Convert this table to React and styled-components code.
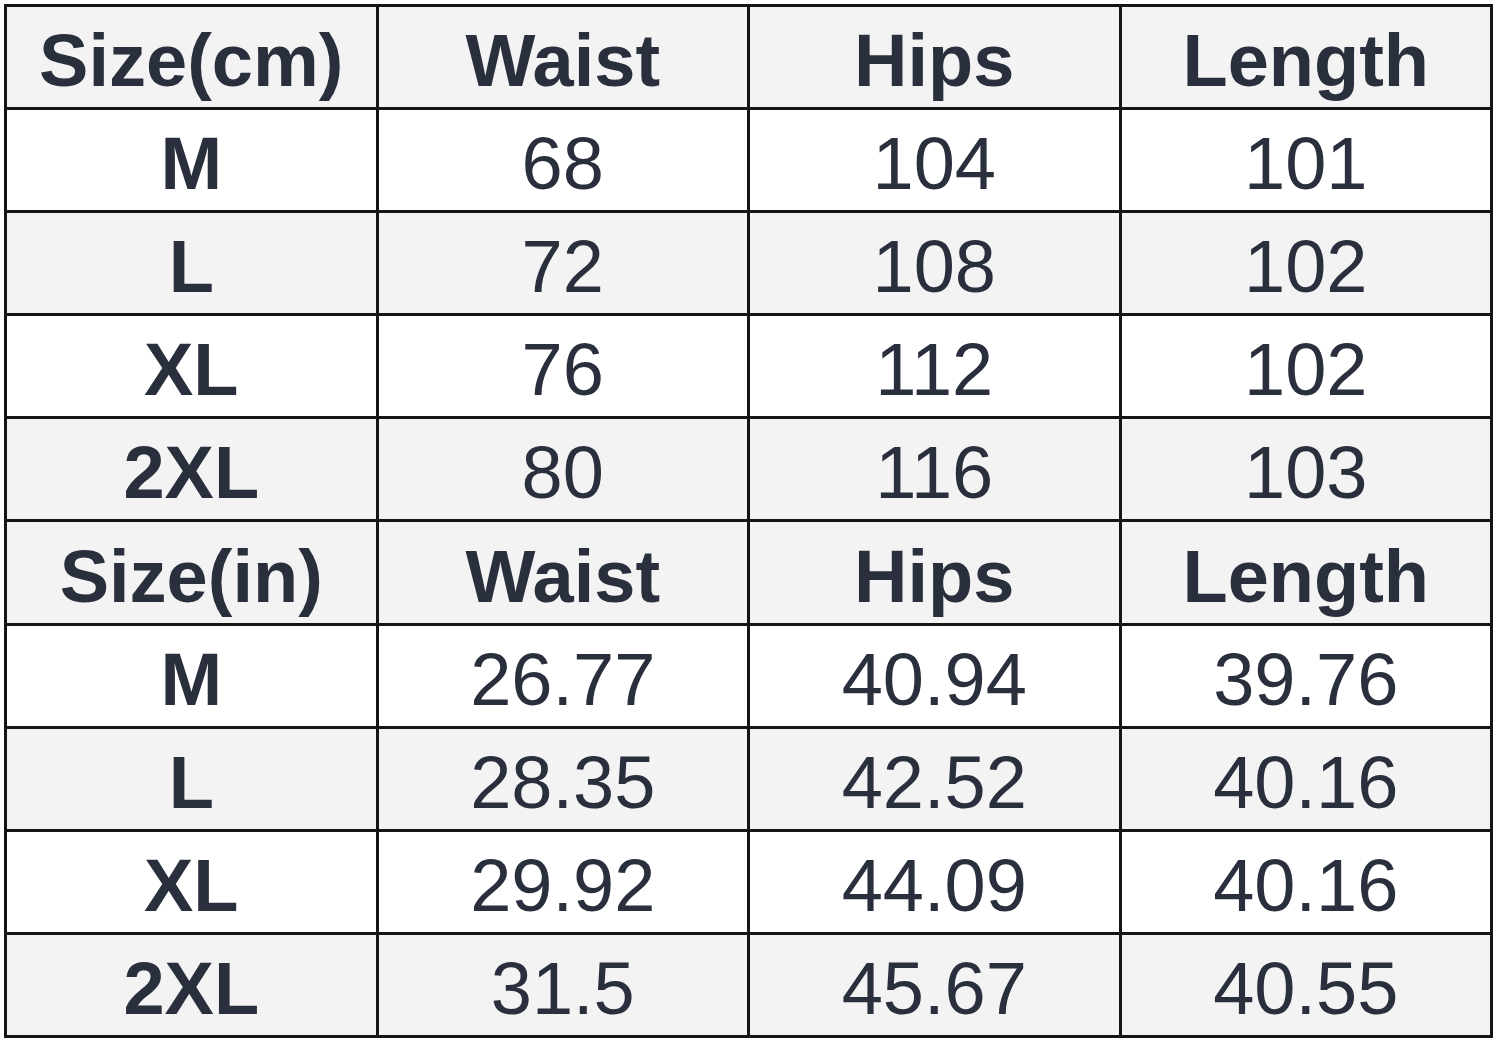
import React from "react";
import styled, { createGlobalStyle } from "styled-components";

const Global = createGlobalStyle`
  html, body { margin: 0; padding: 0; background: #ffffff; }
  body { font-family: "Liberation Sans", Arial, sans-serif; }
`;

const Page = styled.div`
  padding: 4px 0 0 4px;
`;

const Grid = styled.div`
  box-sizing: border-box;
  width: 1489px;
  height: 1034px;
  display: grid;
  grid-template-columns: repeat(4, 1fr);
  grid-template-rows: repeat(10, 1fr);
  border-left: 3px solid #151515;
  border-top: 3px solid #151515;
`;

const Cell = styled.div`
  display: flex;
  align-items: center;
  justify-content: center;
  padding-top: 8px;
  box-sizing: border-box;
  border-right: 3px solid #151515;
  border-bottom: 3px solid #151515;
  background: ${(p) => (p.$shade ? "#f3f3f3" : "#ffffff")};
  color: #2a2f3d;
  font-size: 74px;
  font-weight: ${(p) => (p.$bold ? 700 : 400)};
  line-height: 1;
  white-space: nowrap;
`;

const rows = [
  { cells: ["Size(cm)", "Waist", "Hips", "Length"], header: true, shade: true },
  { cells: ["M", "68", "104", "101"], shade: false },
  { cells: ["L", "72", "108", "102"], shade: true },
  { cells: ["XL", "76", "112", "102"], shade: false },
  { cells: ["2XL", "80", "116", "103"], shade: true },
  { cells: ["Size(in)", "Waist", "Hips", "Length"], header: true, shade: true },
  { cells: ["M", "26.77", "40.94", "39.76"], shade: false },
  { cells: ["L", "28.35", "42.52", "40.16"], shade: true },
  { cells: ["XL", "29.92", "44.09", "40.16"], shade: false },
  { cells: ["2XL", "31.5", "45.67", "40.55"], shade: true },
];

export default function App() {
  return (
    <>
      <Global />
      <Page>
        <Grid>
          {rows.map((r, ri) =>
            r.cells.map((c, ci) => (
              <Cell key={`${ri}-${ci}`} $shade={r.shade} $bold={r.header || ci === 0}>
                {c}
              </Cell>
            ))
          )}
        </Grid>
      </Page>
    </>
  );
}
